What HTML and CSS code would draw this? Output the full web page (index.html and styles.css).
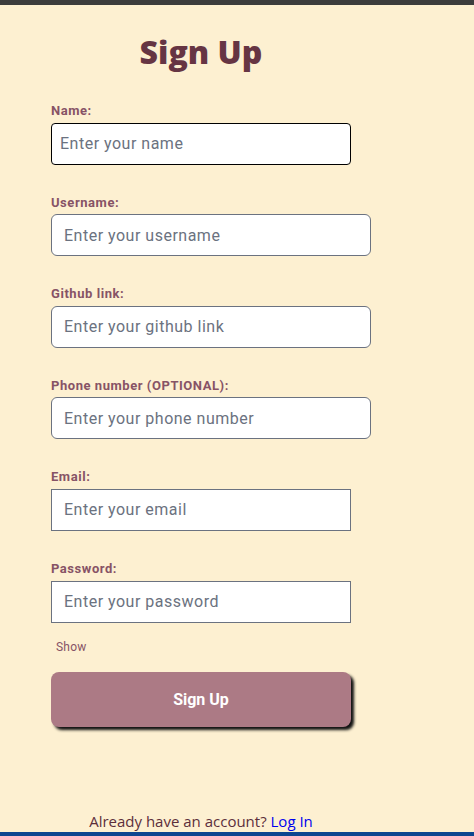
FILE: index.html
```html
<!DOCTYPE html>
<html lang="en">
<head>
<meta charset="utf-8">
<title>Sign Up</title>
<link rel="stylesheet" href="styles.css">
</head>
<body>
<div class="page">
  <div class="topbar"></div>
  <main class="form-wrap">
    <h1 class="title">Sign Up</h1>
    <form class="form">
      <div class="group">
        <label class="label" for="name">Name:</label>
        <input class="field field-focus" id="name" type="text" placeholder="Enter your name">
      </div>
      <div class="group">
        <label class="label" for="username">Username:</label>
        <input class="field field-round wide" id="username" type="text" placeholder="Enter your username">
      </div>
      <div class="group">
        <label class="label" for="github">Github link:</label>
        <input class="field field-round wide" id="github" type="text" placeholder="Enter your github link">
      </div>
      <div class="group">
        <label class="label" for="phone">Phone number (OPTIONAL):</label>
        <input class="field field-round wide" id="phone" type="text" placeholder="Enter your phone number">
      </div>
      <div class="group">
        <label class="label" for="email">Email:</label>
        <input class="field field-square" id="email" type="email" placeholder="Enter your email">
      </div>
      <div class="group group-last">
        <label class="label" for="password">Password:</label>
        <input class="field field-square" id="password" type="password" placeholder="Enter your password">
      </div>
      <button type="button" class="show-btn">Show</button>
      <button type="submit" class="submit-btn">Sign Up</button>
    </form>
  </main>
  <footer class="footer">Already have an account? <a class="login-link" href="#">Log In</a></footer>
  <div class="bottombar"></div>
</div>
</body>
</html>
```
FILE: styles.css
```css
html, body {
  margin: 0;
  padding: 0;
  background: #fdf0d1;
}
.page {
  min-height: 836px;
  display: flex;
  flex-direction: column;
  background: #fdf0d1;
}
.topbar {
  height: 5px;
  background: #3c3c3c;
  flex: none;
}
.form-wrap {
  width: 300px;
  margin-left: 51px;
}
.title {
  margin: 27px 0 31px;
  height: 40px;
  line-height: 40px;
  text-align: center;
  font-family: "Open Sans", sans-serif;
  font-weight: 800;
  font-size: 32px;
  color: #663543;
}
.form {
  display: flex;
  flex-direction: column;
  align-items: flex-start;
}
.group {
  display: flex;
  flex-direction: column;
  margin-bottom: 30px;
}
.group-last {
  margin-bottom: 0;
}
.label {
  font-family: Roboto, sans-serif;
  font-weight: 700;
  font-size: 13px;
  letter-spacing: 0.55px;
  line-height: 15.6px;
  margin-bottom: 4px;
  color: #875366;
}
.field {
  box-sizing: border-box;
  width: 300px;
  height: 42px;
  margin: 0;
  padding: 0 12px;
  background: #fff;
  border: 1px solid #6b7280;
  font-family: Roboto, sans-serif;
  font-size: 16px;
  letter-spacing: 0.5px;
  color: #111;
  outline: none;
}
.field::placeholder {
  color: #6b7280;
  opacity: 1;
}
.wide {
  width: 320px;
}
.field-focus {
  border-color: #000;
  border-radius: 4px;
  padding-left: 8px;
}
.field-round {
  border-radius: 6px;
}
.field-square {
  border-radius: 0;
}
.show-btn {
  margin-top: 17px;
  padding: 0 5px;
  background: none;
  border: none;
  font-family: Roboto, sans-serif;
  font-size: 12px;
  letter-spacing: 0.2px;
  line-height: 15px;
  color: #875366;
  cursor: pointer;
}
.submit-btn {
  margin-top: 17px;
  width: 300px;
  height: 55px;
  border: none;
  border-radius: 8px;
  background: #ac7a85;
  color: #fff;
  font-family: Roboto, sans-serif;
  font-weight: 700;
  font-size: 16px;
  box-shadow: 3px 3px 3px #111;
  cursor: pointer;
}
.footer {
  margin-top: auto;
  margin-bottom: 0;
  width: 300px;
  margin-left: 51px;
  text-align: center;
  font-family: "Open Sans", sans-serif;
  font-size: 15px;
  line-height: 21px;
  color: #5c2e3b;
}
.login-link {
  color: #0000ee;
  text-decoration: none;
}
.bottombar {
  height: 4px;
  background: #0d4690;
  flex: none;
}
```
